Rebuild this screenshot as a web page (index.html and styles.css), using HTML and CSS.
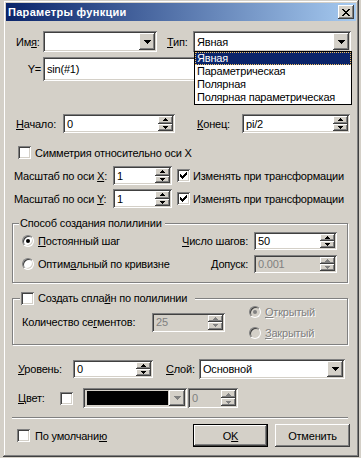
FILE: index.html
```html
<!DOCTYPE html>
<html lang="ru">
<head>
  <meta charset="UTF-8" />
  <title>Параметры функции</title>
  <link rel="stylesheet" href="styles.css">
</head>
<body>
  <svg class="defs" width="0" height="0">
    <defs>
      <path id="tri-down" d="M0 0h7v1H0z M1 1h5v1H1z M2 2h3v1H2z M3 3h1v1H3z"/>
      <path id="tri-up-s" d="M2 0h1v1H2z M1 1h3v1H1z M0 2h5v1H0z"/>
      <path id="tri-down-s" d="M0 0h5v1H0z M1 1h3v1H1z M2 2h1v1H2z"/>
      <path id="check" d="M6 0h1v1H6z M5 1h2v1H5z M0 2h1v1H0z M4 2h3v1H4z M0 3h2v1H0z M3 3h3v1H3z M0 4h5v1H0z M1 5h3v1H1z M2 6h1v1H2z"/>
      <path id="cross" d="M0 0h2v1H0z M6 0h2v1H6z M1 1h2v1H1z M5 1h2v1H5z M2 2h4v1H2z M3 3h2v1H3z M2 4h4v1H2z M1 5h2v1H1z M5 5h2v1H5z M0 6h2v1H0z M6 6h2v1H6z"/>
    </defs>
  </svg>

  <div class="window">
    <div class="titlebar">
      <span class="title">Параметры функции</span>
      <span class="close-btn"><svg width="8" height="7"><use href="#cross"/></svg></span>
    </div>

    <div class="content">
      <div class="row row-name">
        <span class="lbl lbl-name">Им<u>я</u>:</span>
        <div class="edit combo f-name">
          <span class="val"></span>
          <span class="dbtn"><svg class="ar" width="7" height="4"><use href="#tri-down"/></svg></span>
        </div>
        <span class="lbl lbl-type"><u>Т</u>ип:</span>
        <div class="edit combo f-type">
          <span class="val">Явная</span>
          <span class="dbtn"><svg class="ar" width="7" height="4"><use href="#tri-down"/></svg></span>
        </div>
      </div>

      <div class="row row-y">
        <span class="lbl lbl-y">Y=</span>
        <div class="edit f-y"><span class="val">sin(#1)</span></div>
      </div>

      <div class="row row-range">
        <span class="lbl lbl-start"><u>Н</u>ачало:</span>
        <div class="edit f-start">
          <span class="val">0</span>
          <span class="spinner">
            <span class="sbtn"><svg class="ar" width="5" height="3"><use href="#tri-up-s"/></svg></span>
            <span class="sbtn"><svg class="ar" width="5" height="3"><use href="#tri-down-s"/></svg></span>
          </span>
        </div>
        <span class="lbl lbl-end"><u>К</u>онец:</span>
        <div class="edit f-end">
          <span class="val">pi/2</span>
          <span class="spinner">
            <span class="sbtn"><svg class="ar" width="5" height="3"><use href="#tri-up-s"/></svg></span>
            <span class="sbtn"><svg class="ar" width="5" height="3"><use href="#tri-down-s"/></svg></span>
          </span>
        </div>
      </div>

      <div class="row row-sym">
        <span class="chk"></span>
        <span class="opt-text">Симметрия относительно оси X</span>
      </div>

      <div class="row row-scale-x">
        <span class="lbl lbl-scale">Масштаб по оси <u>X</u>:</span>
        <div class="edit f-scale">
          <span class="val">1</span>
          <span class="spinner">
            <span class="sbtn"><svg class="ar" width="5" height="3"><use href="#tri-up-s"/></svg></span>
            <span class="sbtn"><svg class="ar" width="5" height="3"><use href="#tri-down-s"/></svg></span>
          </span>
        </div>
        <span class="chk on chk-scale"><svg width="7" height="7"><use href="#check"/></svg></span>
        <span class="opt-text">Изменять при трансформации</span>
      </div>

      <div class="row row-scale-y">
        <span class="lbl lbl-scale">Масштаб по оси <u>Y</u>:</span>
        <div class="edit f-scale">
          <span class="val">1</span>
          <span class="spinner">
            <span class="sbtn"><svg class="ar" width="5" height="3"><use href="#tri-up-s"/></svg></span>
            <span class="sbtn"><svg class="ar" width="5" height="3"><use href="#tri-down-s"/></svg></span>
          </span>
        </div>
        <span class="chk on chk-scale"><svg width="7" height="7"><use href="#check"/></svg></span>
        <span class="opt-text">Изменять при трансформации</span>
      </div>

      <div class="group group-poly">
        <span class="legend legend-poly">Способ создания полилинии</span>
        <div class="grow grow-a">
          <span class="opt"><span class="radio on"></span><span class="opt-text"><u>П</u>остоянный шаг</span></span>
          <span class="lbl lbl-grp"><u>Ч</u>исло шагов:</span>
          <div class="edit f-steps">
            <span class="val">50</span>
            <span class="spinner">
              <span class="sbtn"><svg class="ar" width="5" height="3"><use href="#tri-up-s"/></svg></span>
              <span class="sbtn"><svg class="ar" width="5" height="3"><use href="#tri-down-s"/></svg></span>
            </span>
          </div>
        </div>
        <div class="grow grow-b">
          <span class="opt"><span class="radio"></span><span class="opt-text">Оптим<u>а</u>льный по кривизне</span></span>
          <span class="lbl lbl-grp"><u>Д</u>опуск:</span>
          <div class="edit f-steps dis">
            <span class="val">0.001</span>
            <span class="spinner">
              <span class="sbtn"><svg class="ar" width="5" height="3"><use href="#tri-up-s"/></svg></span>
              <span class="sbtn"><svg class="ar" width="5" height="3"><use href="#tri-down-s"/></svg></span>
            </span>
          </div>
        </div>
      </div>

      <div class="group group-spline">
        <span class="legend legend-spline"><span class="chk"></span><span class="opt-text">Создать спла<u>й</u>н по полилинии</span></span>
        <div class="grow grow-seg">
          <span class="lbl lbl-seg">Количество се<u>г</u>ментов:</span>
          <div class="edit f-seg dis">
            <span class="val">25</span>
            <span class="spinner">
              <span class="sbtn"><svg class="ar" width="5" height="3"><use href="#tri-up-s"/></svg></span>
              <span class="sbtn"><svg class="ar" width="5" height="3"><use href="#tri-down-s"/></svg></span>
            </span>
          </div>
          <div class="radios dis">
            <span class="opt"><span class="radio on"></span><span class="opt-text"><u>О</u>ткрытый</span></span>
            <span class="opt"><span class="radio"></span><span class="opt-text"><u>З</u>акрытый</span></span>
          </div>
        </div>
      </div>

      <div class="row row-level">
        <span class="lbl lbl-level"><u>У</u>ровень:</span>
        <div class="edit f-level">
          <span class="val">0</span>
          <span class="spinner">
            <span class="sbtn"><svg class="ar" width="5" height="3"><use href="#tri-up-s"/></svg></span>
            <span class="sbtn"><svg class="ar" width="5" height="3"><use href="#tri-down-s"/></svg></span>
          </span>
        </div>
        <span class="lbl lbl-layer"><u>С</u>лой:</span>
        <div class="edit combo f-layer">
          <span class="val">Основной</span>
          <span class="dbtn"><svg class="ar" width="7" height="4"><use href="#tri-down"/></svg></span>
        </div>
      </div>

      <div class="row row-color">
        <span class="lbl lbl-color"><u>Ц</u>вет:</span>
        <span class="chk"></span>
        <div class="edit combo f-color dis">
          <span class="swatch"></span>
          <span class="dbtn"><svg class="ar" width="7" height="4"><use href="#tri-down"/></svg></span>
        </div>
        <div class="edit f-width dis">
          <span class="val">0</span>
          <span class="spinner">
            <span class="sbtn"><svg class="ar" width="5" height="3"><use href="#tri-up-s"/></svg></span>
            <span class="sbtn"><svg class="ar" width="5" height="3"><use href="#tri-down-s"/></svg></span>
          </span>
        </div>
      </div>

      <div class="separator"></div>

      <div class="row row-buttons">
        <span class="chk chk-default"></span>
        <span class="opt-text">По умолчани<u>ю</u></span>
        <span class="btn btn-default">O<u>K</u></span>
        <span class="btn">Отменить</span>
      </div>
    </div>

    <div class="droplist">
      <div class="item selected">Явная</div>
      <div class="item">Параметрическая</div>
      <div class="item">Полярная</div>
      <div class="item">Полярная параметрическая</div>
    </div>
  </div>
</body>
</html>
```

FILE: styles.css
```css
* {
  box-sizing: border-box;
}

body {
  margin: 0;
  width: 361px;
  height: 458px;
  overflow: hidden;
  background: #d4d0c8;
  font-family: "Liberation Sans", Arial, sans-serif;
  font-size: 11px;
  letter-spacing: -0.2px;
  color: #000;
}

.defs {
  position: absolute;
}

u {
  text-decoration-thickness: 1px;
  text-underline-offset: 1px;
}

.window {
  position: relative;
  margin-left: 3px;
  width: 356px;
  height: 457px;
  padding: 3px;
  background: #d4d0c8;
  box-shadow: inset -1px -1px #404040, inset 1px 1px #d4d0c8, inset -2px -2px #808080, inset 2px 2px #fff;
}

.titlebar {
  display: flex;
  align-items: center;
  height: 18px;
  padding: 0 2px 0 2px;
  background: linear-gradient(to right, #0a246a, #a6caf0);
  color: #fff;
  font-weight: bold;
  letter-spacing: 0.3px;
}

.title {
  flex: 1;
}

.close-btn {
  display: flex;
  align-items: center;
  justify-content: center;
  width: 16px;
  height: 14px;
  background: #d4d0c8;
  box-shadow: inset -1px -1px #404040, inset 1px 1px #fff, inset -2px -2px #808080;
}

.row {
  display: flex;
  align-items: center;
}

.lbl {
  white-space: nowrap;
}

/* sunken field */
.edit {
  display: flex;
  align-items: stretch;
  padding: 2px;
  background: #fff;
  box-shadow: inset 1px 1px #808080, inset -1px -1px #fff, inset 2px 2px #404040, inset -2px -2px #d4d0c8;
}

.edit .val {
  flex: 1;
  display: flex;
  align-items: center;
  padding-left: 2px;
  white-space: nowrap;
  overflow: hidden;
}

.edit.dis {
  background: #d4d0c8;
  color: #808080;
}

.spinner {
  display: flex;
  flex-direction: column;
  width: 15px;
}

.sbtn, .dbtn, .btn {
  display: flex;
  align-items: center;
  justify-content: center;
  background: #d4d0c8;
  box-shadow: inset -1px -1px #404040, inset 1px 1px #fff, inset -2px -2px #808080;
}

.sbtn {
  flex: 1;
}

.dbtn {
  width: 16px;
}

.ar {
  fill: #000;
}

.dis .ar {
  fill: #808080;
}

/* checkbox and radio */
.chk {
  flex: none;
  display: flex;
  align-items: center;
  justify-content: center;
  width: 13px;
  height: 13px;
  background: #fff;
  box-shadow: inset 1px 1px #808080, inset -1px -1px #fff, inset 2px 2px #404040, inset -2px -2px #d4d0c8;
}

.radio {
  flex: none;
  position: relative;
  width: 12px;
  height: 12px;
  border-radius: 50%;
  background: #fff;
  border: 1px solid;
  border-color: #808080 #fff #fff #808080;
  box-shadow: inset 1px 1px #404040, inset -1px -1px #d4d0c8;
}

.radio.on::after {
  content: "";
  position: absolute;
  left: 3px;
  top: 3px;
  width: 4px;
  height: 4px;
  border-radius: 50%;
  background: #000;
}

.dis .radio {
  background: #d4d0c8;
}

.dis .radio.on::after {
  background: #808080;
}

.dis .opt-text {
  color: #808080;
  text-shadow: 1px 1px #fff;
}

.opt {
  display: flex;
  align-items: center;
  gap: 4px;
  white-space: nowrap;
}

/* row 1 */
.row-name {
  margin-top: 10px;
  height: 21px;
  padding-left: 10px;
}

.combo {
  height: 21px;
}

.lbl-name {
  width: 27px;
}

.f-name {
  width: 114px;
  height: 21px;
}

.lbl-type {
  margin-left: 10px;
  width: 26px;
}

.f-type {
  width: 158px;
  height: 21px;
}

/* Y= */
.row-y {
  margin-top: 5px;
  height: 24px;
}

.lbl-y {
  width: 37px;
  padding-right: 2px;
  text-align: right;
}

.f-y {
  width: 308px;
  height: 24px;
}

/* range */
.row-range {
  margin-top: 33px;
  height: 19px;
  padding-left: 10px;
}

.lbl-start {
  width: 47px;
}

.f-start {
  width: 112px;
  height: 19px;
}

.lbl-end {
  margin-left: 22px;
  width: 45px;
}

.f-end {
  width: 108px;
  height: 19px;
}

.row-sym {
  margin-top: 12px;
  height: 15px;
  padding-left: 12px;
  gap: 4px;
}

.row-scale-x {
  margin-top: 6px;
  height: 19px;
  padding-left: 8px;
}

.row-scale-y {
  margin-top: 4px;
  height: 19px;
  padding-left: 8px;
}

.lbl-scale {
  width: 99px;
}

.f-scale {
  width: 59px;
  height: 19px;
}

.chk-scale {
  margin-left: 5px;
  margin-right: 3px;
}

/* group boxes */
.group {
  position: relative;
  margin-left: 6px;
  width: 336px;
  border: 1px solid #808080;
  box-shadow: inset 1px 1px #fff, 1px 1px #fff;
}

.legend {
  position: absolute;
  top: -8px;
  display: flex;
  align-items: center;
  height: 14px;
  background: #d4d0c8;
  white-space: nowrap;
}

.legend-poly {
  left: 6px;
  padding: 0 3px 0 1px;
}

.legend-spline {
  left: 7px;
  padding: 0 8px 0 1px;
  gap: 4px;
}

.group-poly {
  margin-top: 15px;
  height: 60px;
  padding: 8px 0 0 9px;
}

.grow {
  display: flex;
  align-items: center;
  height: 18px;
}

.grow-b {
  margin-top: 5px;
}

.grow .opt {
  width: 160px;
}

.lbl-grp {
  width: 72px;
  padding-right: 6px;
  text-align: right;
}

.f-steps {
  width: 83px;
  height: 18px;
}

.group-spline {
  margin-top: 15px;
  height: 47px;
  padding: 5px 0 0 9px;
}

.grow-seg {
  height: 36px;
}

.lbl-seg {
  width: 130px;
}

.f-seg {
  width: 73px;
  height: 19px;
}

.radios {
  display: flex;
  flex-direction: column;
  gap: 6px;
  margin-left: 24px;
}

.radios .opt {
  height: 15px;
  width: auto;
}

/* level / layer */
.row-level {
  margin-top: 14px;
  height: 20px;
  padding-left: 12px;
}

.lbl-level {
  width: 55px;
}

.f-level {
  width: 80px;
  height: 18px;
}

.lbl-layer {
  margin-left: 13px;
  width: 33px;
}

.f-layer {
  width: 146px;
  height: 20px;
}

.row-color {
  margin-top: 9px;
  height: 20px;
  padding-left: 12px;
}

.lbl-color {
  width: 42px;
}

.f-color {
  margin-left: 10px;
  width: 104px;
  height: 20px;
  padding: 3px 2px 3px 4px;
  gap: 1px;
}

.swatch {
  flex: 1;
  background: #000;
}

.f-color .dbtn {
  margin: -1px 0;
}

.f-width {
  margin-left: 1px;
  width: 50px;
  height: 20px;
}

.separator {
  margin: 9px 0 0 6px;
  width: 336px;
  height: 2px;
  border-top: 1px solid #808080;
  border-bottom: 1px solid #fff;
}

.row-buttons {
  margin-top: 5px;
  height: 23px;
  padding-left: 11px;
  gap: 5px;
}

.btn {
  width: 75px;
  height: 23px;
}

.btn-default {
  margin-left: auto;
  margin-right: 2px;
  border: 1px solid #000;
  box-shadow: inset -1px -1px #404040, inset 1px 1px #fff, inset -2px -2px #808080;
}

.row-buttons .btn:last-child {
  margin-right: 6px;
}

/* open list of the Тип combo */
.droplist {
  position: absolute;
  left: 191px;
  top: 51px;
  width: 158px;
  border: 1px solid #000;
  background: #fff;
}

.item {
  height: 13px;
  line-height: 13px;
  padding-left: 2px;
  white-space: nowrap;
}

.item.selected {
  background: #0a246a;
  color: #fff;
  outline: 1px dotted #f0c060;
  outline-offset: -1px;
}
```
